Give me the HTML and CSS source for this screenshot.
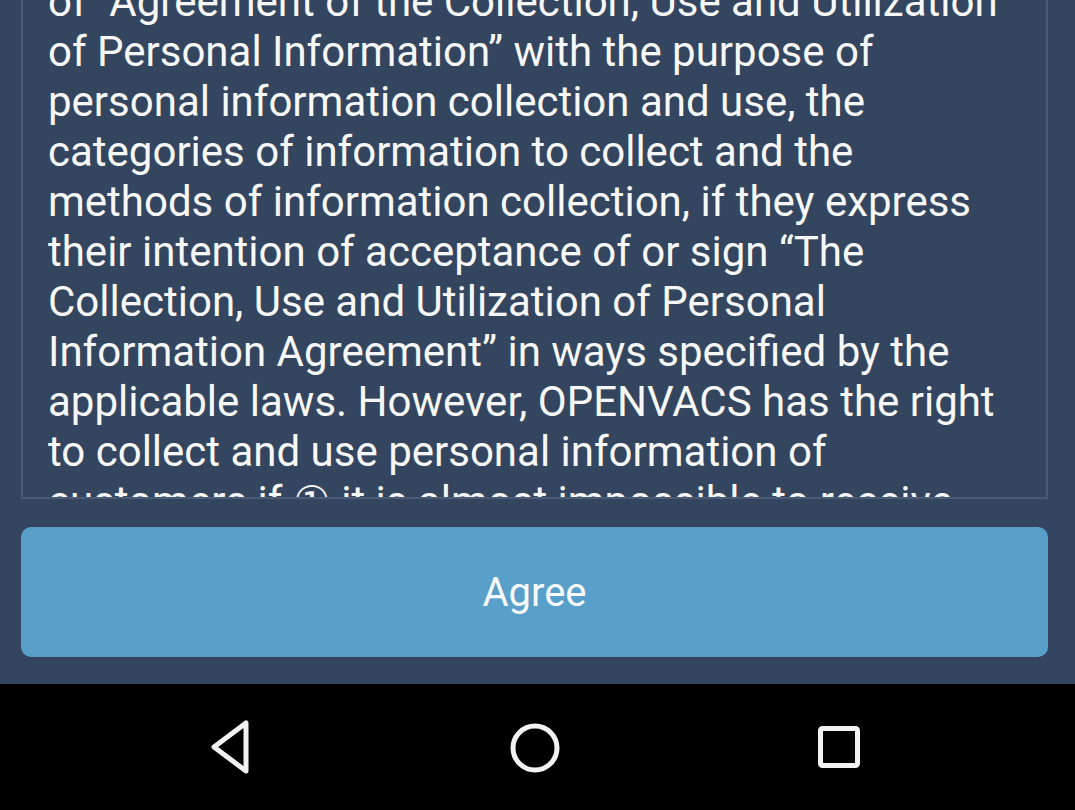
FILE: index.html
```html
<!DOCTYPE html>
<html>
<head>
<meta charset="utf-8">
<link rel="stylesheet" href="styles.css">
</head>
<body>
<div class="screen">
  <main class="content">
    <section class="terms">
      <p class="terms-text">of “Agreement of the Collection, Use and Utilization<br>of Personal Information” with the purpose of<br>personal information collection and use, the<br>categories of information to collect and the<br>methods of information collection, if they express<br>their intention of acceptance of or sign “The<br>Collection, Use and Utilization of Personal<br>Information Agreement” in ways specified by the<br>applicable laws. However, OPENVACS has the right<br>to collect and use personal information of<br>customers if ① it is almost impossible to receive</p>
    </section>
    <button class="agree-btn">Agree</button>
  </main>
  <nav class="navbar">
    <svg class="nav-icon" width="48" height="56" viewBox="0 0 48 56">
      <path d="M40 4 L40 52 L8 28 Z" fill="none" stroke="#f2f2f2" stroke-width="5" stroke-linejoin="round"/>
    </svg>
    <svg class="nav-icon" width="56" height="56" viewBox="0 0 56 56">
      <circle cx="28" cy="29" r="22" fill="none" stroke="#f2f2f2" stroke-width="5"/>
    </svg>
    <svg class="nav-icon" width="48" height="56" viewBox="0 0 48 56">
      <rect x="5.5" y="9.5" width="37" height="37" rx="2" fill="none" stroke="#f2f2f2" stroke-width="5"/>
    </svg>
  </nav>
</div>
</body>
</html>
```
FILE: styles.css
```css
* { box-sizing: border-box; }
html, body { margin: 0; padding: 0; }
body {
  width: 1075px;
  height: 810px;
  overflow: hidden;
  background: #34465f;
  font-family: Roboto, "Noto Sans", sans-serif;
}
.screen {
  display: flex;
  flex-direction: column;
  height: 810px;
}
.content {
  height: 684px;
  display: flex;
  flex-direction: column;
  padding: 0 27px 0 21px;
  background: #34465f;
}
.terms {
  height: 499px;
  border: 2px solid #4b5b75;
  border-top: none;
  overflow: hidden;
  padding: 0 10px 0 25px;
}
.terms-text {
  margin: -23px 0 0 0;
  color: #f7f7f7;
  font-size: 42px;
  line-height: 50px;
  white-space: nowrap;
}
.agree-btn {
  margin-top: 28px;
  height: 130px;
  border: none;
  border-radius: 10px;
  background: #58a0c9;
  color: #f7f9fb;
  font-family: Roboto, "Noto Sans", sans-serif;
  font-size: 40px;
  padding: 0;
}
.navbar {
  flex: 1;
  background: #000;
  display: flex;
  align-items: center;
  justify-content: space-between;
  padding: 0 212px 0 206px;
}
.nav-icon { display: block; }
```
